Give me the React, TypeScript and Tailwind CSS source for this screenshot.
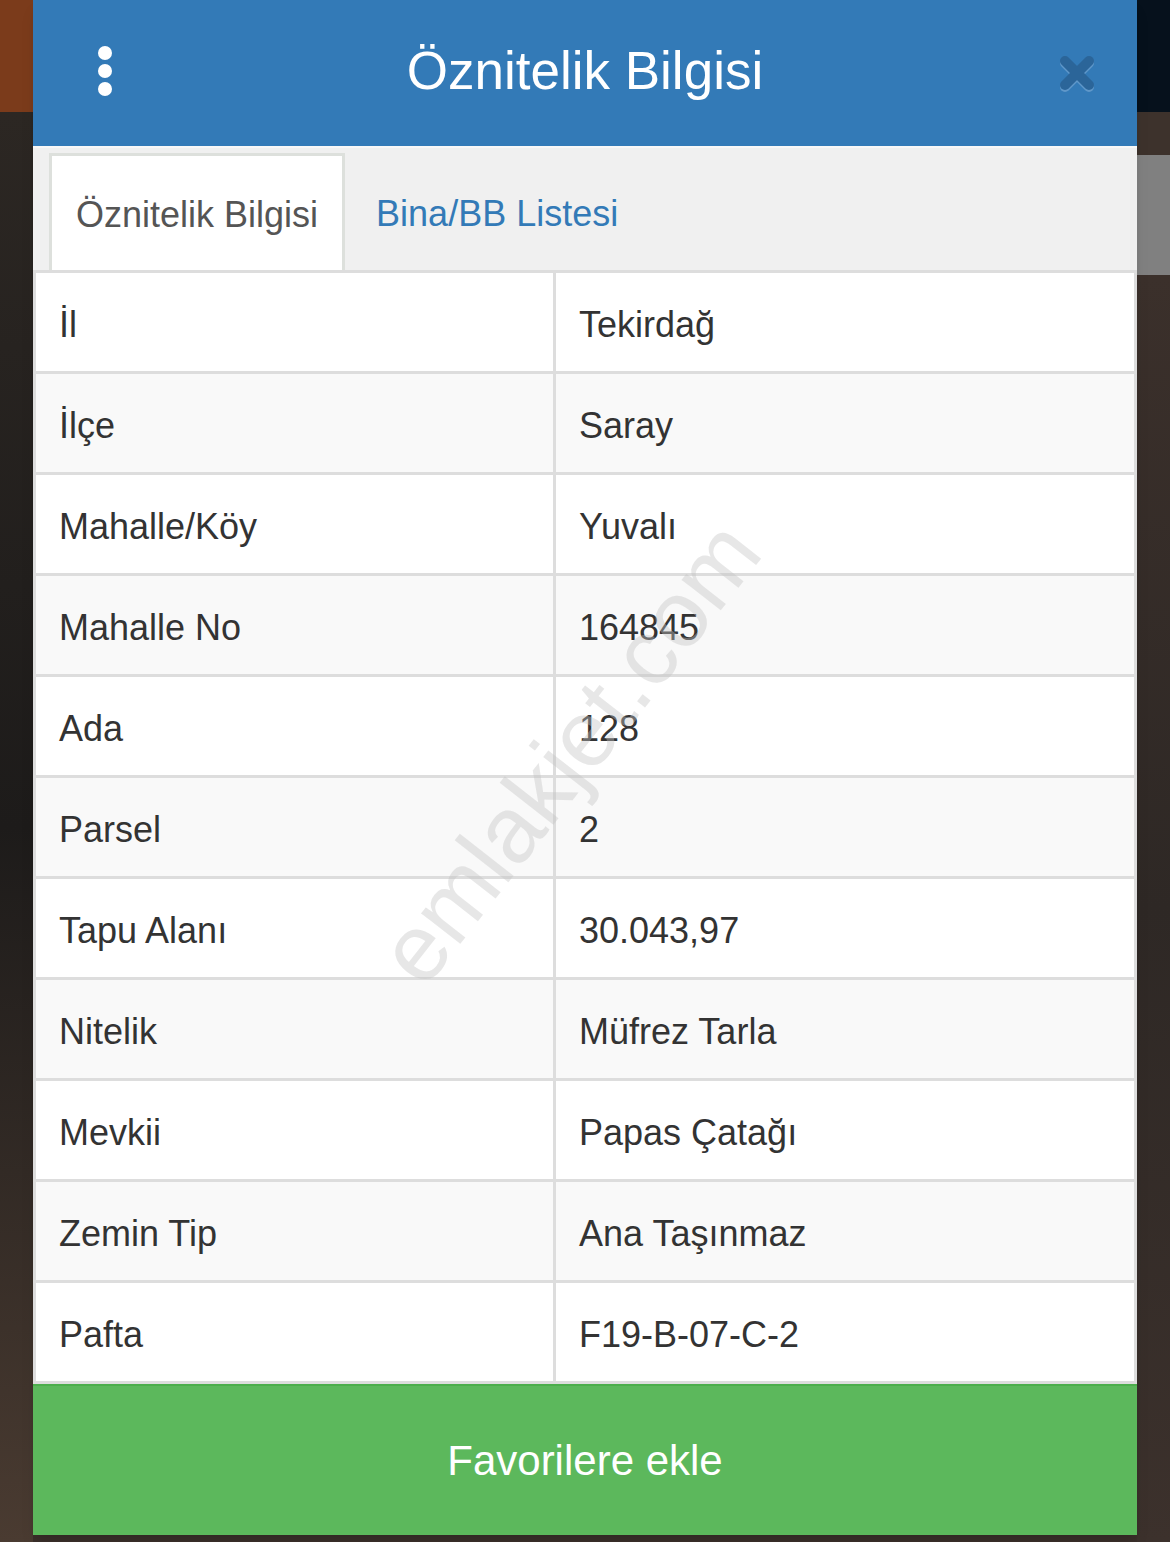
import React from "react";

const ROWS: [string, string][] = [
  ["İl", "Tekirdağ"],
  ["İlçe", "Saray"],
  ["Mahalle/Köy", "Yuvalı"],
  ["Mahalle No", "164845"],
  ["Ada", "128"],
  ["Parsel", "2"],
  ["Tapu Alanı", "30.043,97"],
  ["Nitelik", "Müfrez Tarla"],
  ["Mevkii", "Papas Çatağı"],
  ["Zemin Tip", "Ana Taşınmaz"],
  ["Pafta", "F19-B-07-C-2"],
];

function CloseIcon() {
  return (
    <svg width="40" height="42" viewBox="0 0 40 42" fill="none">
      {/* soft highlight under the cross */}
      <g stroke="#5f97c9" strokeWidth="10" strokeLinecap="round">
        <line x1="8" y1="10" x2="32" y2="34" />
        <line x1="32" y1="10" x2="8" y2="34" />
      </g>
      <g stroke="#2b6599" strokeWidth="10" strokeLinecap="round">
        <line x1="8" y1="8" x2="32" y2="32" />
        <line x1="32" y1="8" x2="8" y2="32" />
      </g>
    </svg>
  );
}

export default function App() {
  return (
    <div className="flex h-[1542px] w-[1170px] overflow-hidden bg-[#3a2f2a] font-['Liberation_Sans',Arial,sans-serif]">
      {/* Map strip, left */}
      <div className="flex w-[33px] shrink-0 flex-col">
        <div className="h-[112px] bg-[#7b3b1b]" />
        <div className="flex-1 bg-gradient-to-b from-[#2c2723] via-[#1d1b1a] to-[#4a3b31]" />
      </div>

      {/* Panel */}
      <div className="flex w-[1104px] shrink-0 flex-col">
        <div className="relative flex h-[1535px] flex-col shadow-lg">
          {/* Header */}
          <div className="grid h-[146px] grid-cols-[160px_1fr_160px] items-center bg-[#337ab7]">
            <div className="flex flex-col gap-[4px] pb-[4px] pl-[65px]">
              <span className="h-[14px] w-[14px] rounded-full bg-white" />
              <span className="h-[14px] w-[14px] rounded-full bg-white" />
              <span className="h-[14px] w-[14px] rounded-full bg-white" />
            </div>
            <h1 className="pb-[5px] text-center text-[53px] leading-none text-white">Öznitelik Bilgisi</h1>
            <div className="flex justify-end pr-[40px] pt-[2px]">
              <CloseIcon />
            </div>
          </div>

          {/* Tabs */}
          <div className="flex h-[127px] items-end border-t-2 border-b-[3px] border-t-[#f7f7f7] border-b-[#dddddd] bg-[#f0f0f0] pl-4">
            <div className="flex h-[117px] items-center border-[3px] border-b-0 border-[#dde0dc] bg-white px-6 pt-[4px] text-[36px] text-[#555]">
              Öznitelik Bilgisi
            </div>
            <div className="flex h-[117px] items-center pl-[31px] pt-[4px] text-[36px] text-[#337ab7]">
              Bina/BB Listesi
            </div>
          </div>

          {/* Attribute table */}
          <div className="flex flex-col border-x-[3px] border-[#dddddd]">
            {ROWS.map(([label, value], i) => (
              <div
                key={label}
                className={`flex h-[101px] border-b-[3px] border-[#dddddd] text-[36px] text-[#333] ${
                  i % 2 === 0 ? "bg-white" : "bg-[#f9f9f9]"
                }`}
              >
                <div className="flex w-[520px] shrink-0 items-center border-r-[3px] border-[#dddddd] pl-[23px] pt-[6px]">
                  {label}
                </div>
                <div className="flex flex-1 items-center pl-[23px] pt-[6px]">{value}</div>
              </div>
            ))}
          </div>

          {/* Button */}
          <button className="flex flex-1 items-center justify-center border-t-2 border-[#4cae4c] bg-[#5cb85c] text-[42px] text-white">
            Favorilere ekle
          </button>

          {/* Watermark */}
          <div className="pointer-events-none absolute left-[536px] top-[752px] -translate-x-1/2 -translate-y-1/2 -rotate-[52deg] whitespace-nowrap text-[94px] text-[#c4c4c4]/40">
            emlakjet.com
          </div>
        </div>
      </div>

      {/* Map strip, right */}
      <div className="flex w-[33px] shrink-0 flex-col">
        <div className="h-[112px] bg-[#06111c]" />
        <div className="h-[43px] bg-[#3d322c]" />
        <div className="h-[120px] bg-[#808080]" />
        <div className="flex-1 bg-gradient-to-b from-[#3b302b] via-[#2e2825] to-[#3c312c]" />
      </div>
    </div>
  );
}
